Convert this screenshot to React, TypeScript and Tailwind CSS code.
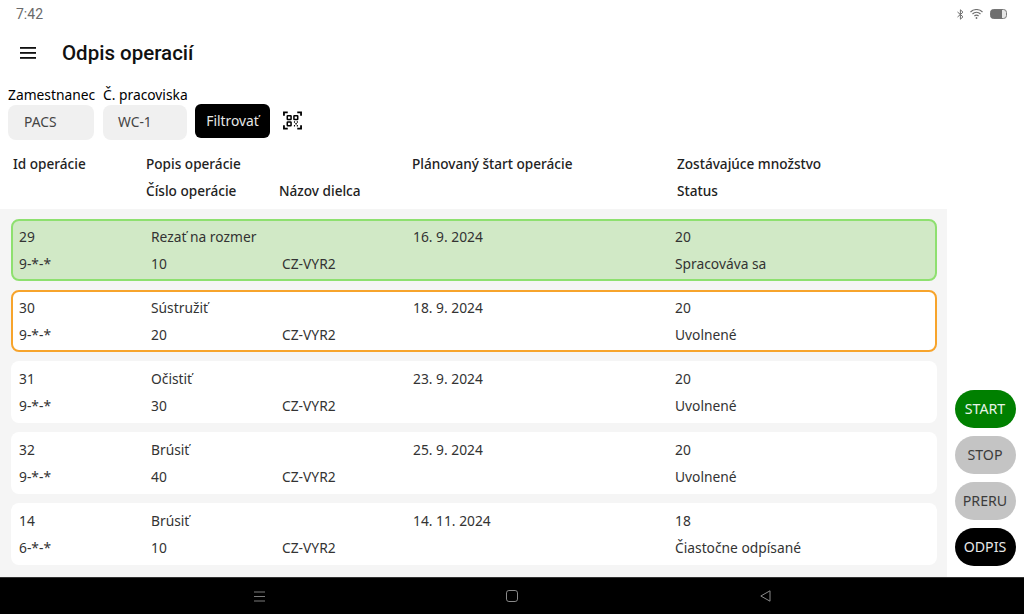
const rows = [
  { id: '29', code: '9-*-*', name: 'Rezať na rozmer', no: '10', date: '16. 9. 2024', qty: '20', status: 'Spracováva sa', box: 'bg-[#d1e9c6] border-[#8ee06f]' },
  { id: '30', code: '9-*-*', name: 'Sústružiť', no: '20', date: '18. 9. 2024', qty: '20', status: 'Uvolnené', box: 'bg-white border-[#f7a42c]' },
  { id: '31', code: '9-*-*', name: 'Očistiť', no: '30', date: '23. 9. 2024', qty: '20', status: 'Uvolnené', box: 'bg-white border-transparent' },
  { id: '32', code: '9-*-*', name: 'Brúsiť', no: '40', date: '25. 9. 2024', qty: '20', status: 'Uvolnené', box: 'bg-white border-transparent' },
  { id: '14', code: '6-*-*', name: 'Brúsiť', no: '10', date: '14. 11. 2024', qty: '18', status: 'Čiastočne odpísané', box: 'bg-white border-transparent' },
];

const actions = [
  { label: 'START', cls: 'bg-[#008000] text-[#e8f3e8]' },
  { label: 'STOP', cls: 'bg-[#c4c4c4] text-[#3c3c3c]' },
  { label: 'PRERU', cls: 'bg-[#c4c4c4] text-[#3c3c3c]' },
  { label: 'ODPIS', cls: 'bg-black text-[#e8e8e8]' },
];

function QrIcon() {
  return (
    <svg width="19" height="19" viewBox="0 0 20 20" fill="none" stroke="black" strokeWidth="1.6">
      <path d="M1 5V1.5H5M15 1.5H19V5M1 15V18.5H5M15 18.5H19V15" strokeWidth="1.9" />
      <rect x="4.5" y="5" width="4" height="4" rx="0.5" />
      <rect x="11.5" y="5" width="4" height="4" rx="0.5" />
      <rect x="4.5" y="11.5" width="4" height="4" rx="0.5" />
      <path d="M11.5 11.5h1.2M14.5 11.5h1.2M13 13.5h1.5M11.5 15.5h1.2M14.5 15.5h1.2" />
    </svg>
  );
}

function StatusIcons() {
  return (
    <div className="flex items-center text-[#6e6e6e]">
      <svg width="7" height="11" viewBox="0 0 7 11" fill="none" stroke="#6e6e6e" strokeWidth="1">
        <path d="M0.5 3L6 7.8L3.4 10.2V0.8L6 3.2L0.5 8" />
      </svg>
      <svg className="ml-[6px]" width="13" height="10" viewBox="0 0 13 10" fill="none" stroke="#6e6e6e" strokeWidth="1.1">
        <path d="M0.5 3A8.5 8.5 0 0 1 12.5 3M2.5 5A5.6 5.6 0 0 1 10.5 5M4.4 7A2.9 2.9 0 0 1 8.6 7" />
        <circle cx="6.5" cy="9" r="0.9" fill="#6e6e6e" stroke="none" />
      </svg>
      <svg className="ml-[7px]" width="17" height="10" viewBox="0 0 17 10" fill="none">
        <rect x="0.5" y="0.5" width="16" height="9" rx="3" stroke="#7a7a7a" fill="#e6e6e6" />
        <path d="M0.5 3.5A3 3 0 0 1 3.5 0.5H12V9.5H3.5A3 3 0 0 1 0.5 6.5Z" fill="#6e6e6e" />
      </svg>
    </div>
  );
}

export default function App() {
  return (
    <div className="w-[1024px] h-[614px] flex flex-col bg-white overflow-hidden text-[#1f1f1f] font-['Noto_Sans','Open_Sans',sans-serif]">
      <div className="h-[28px] shrink-0 flex items-center justify-between pl-4 pr-[17px] text-[14px] text-[#6a6a6a] font-['Roboto',sans-serif]">
        <span>7:42</span>
        <StatusIcons />
      </div>

      <div className="h-[50px] shrink-0 flex items-center pl-5">
        <svg width="16" height="12" viewBox="0 0 16 12" fill="#111">
          <rect width="16" height="1.8" />
          <rect y="5" width="16" height="1.8" />
          <rect y="10" width="16" height="1.8" />
        </svg>
        <h1 className="ml-[26px] text-[20.5px] font-medium leading-none text-[#111] font-['Roboto',sans-serif]">Odpis operacií</h1>
      </div>

      <div className="h-[62px] shrink-0 flex items-end pl-2">
        <div className="w-[86px]">
          <div className="text-[13.8px] leading-5 whitespace-nowrap text-black">Zamestnanec</div>
          <div className="h-[35px] rounded-lg bg-[#f0f0f0] pl-4 flex items-center text-[13.8px] text-[#444]">PACS</div>
        </div>
        <div className="w-[84px] ml-[9px]">
          <div className="text-[13.8px] leading-5 whitespace-nowrap text-black">Č. pracoviska</div>
          <div className="h-[35px] rounded-lg bg-[#f0f0f0] pl-[15px] flex items-center text-[13.8px] text-[#444]">WC-1</div>
        </div>
        <button className="w-[75px] h-[34px] ml-[8px] mb-[2px] rounded-md bg-black text-[#e8e8e8] text-[13.8px]">Filtrovať</button>
        <div className="ml-[13px] mb-[10px]"><QrIcon /></div>
      </div>

      <div className="h-[69px] shrink-0 grid grid-cols-[133px_133px_133px_265px_1fr] pl-[13px] text-[13.6px] text-[#222] grid-rows-[27px_27px] pt-[10px]">
        <span className="font-medium leading-[28px]">Id operácie</span>
        <span className="col-span-2 font-medium leading-[28px]">Popis operácie</span>
        <span className="font-medium leading-[28px]">Plánovaný štart operácie</span>
        <span className="font-medium leading-[28px]">Zostávajúce množstvo</span>
        <span />
        <span className="font-medium leading-[28px]">Číslo operácie</span>
        <span className="font-medium leading-[28px]">Názov dielca</span>
        <span />
        <span className="font-medium leading-[28px]">Status</span>
      </div>

      <div className="flex-1 min-h-0 flex">
        <div className="w-[947px] bg-[#f5f5f5] pt-[10px] pl-[11px] pr-[10px] flex flex-col gap-[9px]">
          {rows.map((r) => (
            <div key={r.id + r.date} className={`h-[62px] shrink-0 rounded-lg border-2 ${r.box}`}>
              <div className="px-[6px] pt-[2px] grid grid-cols-[132px_131px_131px_262px_1fr] grid-rows-[27px_27px] text-[13.8px] leading-[27px] text-[#333]">
                <span>{r.id}</span>
                <span className="col-span-2">{r.name}</span>
                <span>{r.date}</span>
                <span>{r.qty}</span>
                <span>{r.code}</span>
                <span>{r.no}</span>
                <span>CZ-VYR2</span>
                <span />
                <span>{r.status}</span>
              </div>
            </div>
          ))}
        </div>
        <div className="flex-1 flex flex-col items-center justify-end gap-[8px] pb-[11px] pr-[1px]">
          {actions.map((a) => (
            <div key={a.label} className={`w-[61px] h-[38px] rounded-full flex items-center justify-center text-[14.2px] ${a.cls}`}>{a.label}</div>
          ))}
        </div>
      </div>

      <div className="h-[37px] shrink-0 bg-black border-t border-[#333] flex items-center">
        <svg className="ml-[254px]" width="11" height="11" viewBox="0 0 11 11" stroke="#7a7a7a" strokeWidth="1">
          <path d="M0 1H11M0 5.5H11M0 10H11" />
        </svg>
        <svg className="ml-[241px]" width="12" height="12" viewBox="0 0 12 12" fill="none" stroke="#8a8a8a" strokeWidth="1">
          <rect x="0.5" y="0.5" width="11" height="11" rx="2.4" />
        </svg>
        <svg className="ml-[242px]" width="11" height="12" viewBox="0 0 11 12" fill="none" stroke="#8a8a8a" strokeWidth="1">
          <path d="M0.8 6L10 0.8V11.2Z" strokeLinejoin="round" />
        </svg>
      </div>
    </div>
  );
}
